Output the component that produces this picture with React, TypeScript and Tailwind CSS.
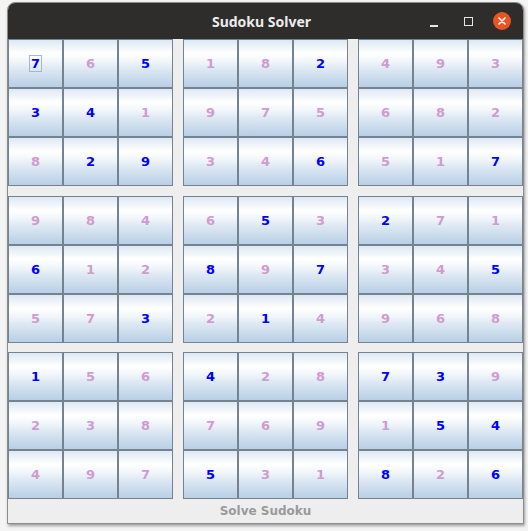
import React from 'react';

// B = given (blue), p = solved (pink)
const rows = [
  '7B 6p 5B 1p 8p 2B 4p 9p 3p',
  '3B 4B 1p 9p 7p 5p 6p 8p 2p',
  '8p 2B 9B 3p 4p 6B 5p 1p 7B',
  '9p 8p 4p 6p 5B 3p 2B 7p 1p',
  '6B 1p 2p 8B 9p 7B 3p 4p 5B',
  '5p 7p 3B 2p 1B 4p 9p 6p 8p',
  '1B 5p 6p 4B 2p 8p 7B 3B 9p',
  '2p 3p 8p 7p 6p 9p 1p 5B 4B',
  '4p 9p 7p 5B 3p 1p 8B 2p 6B',
].map((r) => r.split(' ').map((c) => ({ v: c[0], given: c[1] === 'B' })));

function Cell({ v, given, focused }: { v: string; given: boolean; focused?: boolean }) {
  return (
    <div className="flex h-[49px] w-[55px] items-center justify-center border border-[#74838f] bg-[linear-gradient(to_bottom,#dde8f3_0%,#ffffff_28%,#f2f6fa_45%,#dde8f3_62%,#b8cfe5_100%)]">
      <span
        className={
          'font-["DejaVu_Sans",sans-serif] text-[13px] font-bold leading-none ' +
          (given ? 'text-[#0000ff] ' : 'text-[#cf9ccf] ') +
          (focused ? 'border border-[#a3b8cc] px-[1px] py-[1px]' : '')
        }
      >
        {v}
      </span>
    </div>
  );
}

function Block({ br, bc }: { br: number; bc: number }) {
  const cells = [];
  for (let r = 0; r < 3; r++) {
    for (let c = 0; c < 3; c++) {
      const cell = rows[br * 3 + r][bc * 3 + c];
      cells.push(
        <Cell key={r + '-' + c} v={cell.v} given={cell.given} focused={br === 0 && bc === 0 && r === 0 && c === 0} />
      );
    }
  }
  return <div className="grid grid-cols-3">{cells}</div>;
}

export default function App() {
  return (
    <div className="h-[531px] w-[528px] overflow-hidden bg-[#f4f4f4] pl-[7px] pt-[2px]">
      <div className="w-[517px] overflow-hidden rounded-t-[8px] border border-[#8c8c8c] bg-[#eeeeee] shadow-[1px_2px_3px_rgba(0,0,0,0.35)]">
        {/* title bar */}
        <div className="flex h-[36px] items-center bg-[#2f2c2c]">
          <div className="flex-1 pl-[98px] text-center font-['Noto_Sans',sans-serif] text-[14px] font-bold text-[#ececec]">
            Sudoku Solver
          </div>
          <div className="flex items-center pr-[12px]">
            <div className="flex h-[20px] w-[34px] items-end justify-center pb-[4px]">
              <div className="h-[2px] w-[8px] bg-[#e6e6e6]" />
            </div>
            <div className="mr-[8px] flex h-[20px] w-[34px] items-center justify-center">
              <div className="h-[9px] w-[9px] border-[1.5px] border-[#e6e6e6]" />
            </div>
            <div className="flex h-[18px] w-[18px] items-center justify-center rounded-full bg-[#e95420]">
              <svg width="10" height="10" viewBox="0 0 10 10">
                <path d="M2 2 L8 8 M8 2 L2 8" stroke="#ffffff" strokeWidth="1.6" strokeLinecap="round" />
              </svg>
            </div>
          </div>
        </div>

        {/* board */}
        <div className="flex flex-col">
          <div className="flex gap-[10px]">
            <Block br={0} bc={0} />
            <Block br={0} bc={1} />
            <Block br={0} bc={2} />
          </div>
          <div className="mt-[10px] flex gap-[10px]">
            <Block br={1} bc={0} />
            <Block br={1} bc={1} />
            <Block br={1} bc={2} />
          </div>
          <div className="mt-[9px] flex gap-[10px]">
            <Block br={2} bc={0} />
            <Block br={2} bc={1} />
            <Block br={2} bc={2} />
          </div>
        </div>

        <div className="flex h-[24px] items-center justify-center bg-[#eeeeee] font-['DejaVu_Sans',sans-serif] text-[12px] font-bold text-[#9a9a9a]">
          Solve Sudoku
        </div>
      </div>
    </div>
  );
}
